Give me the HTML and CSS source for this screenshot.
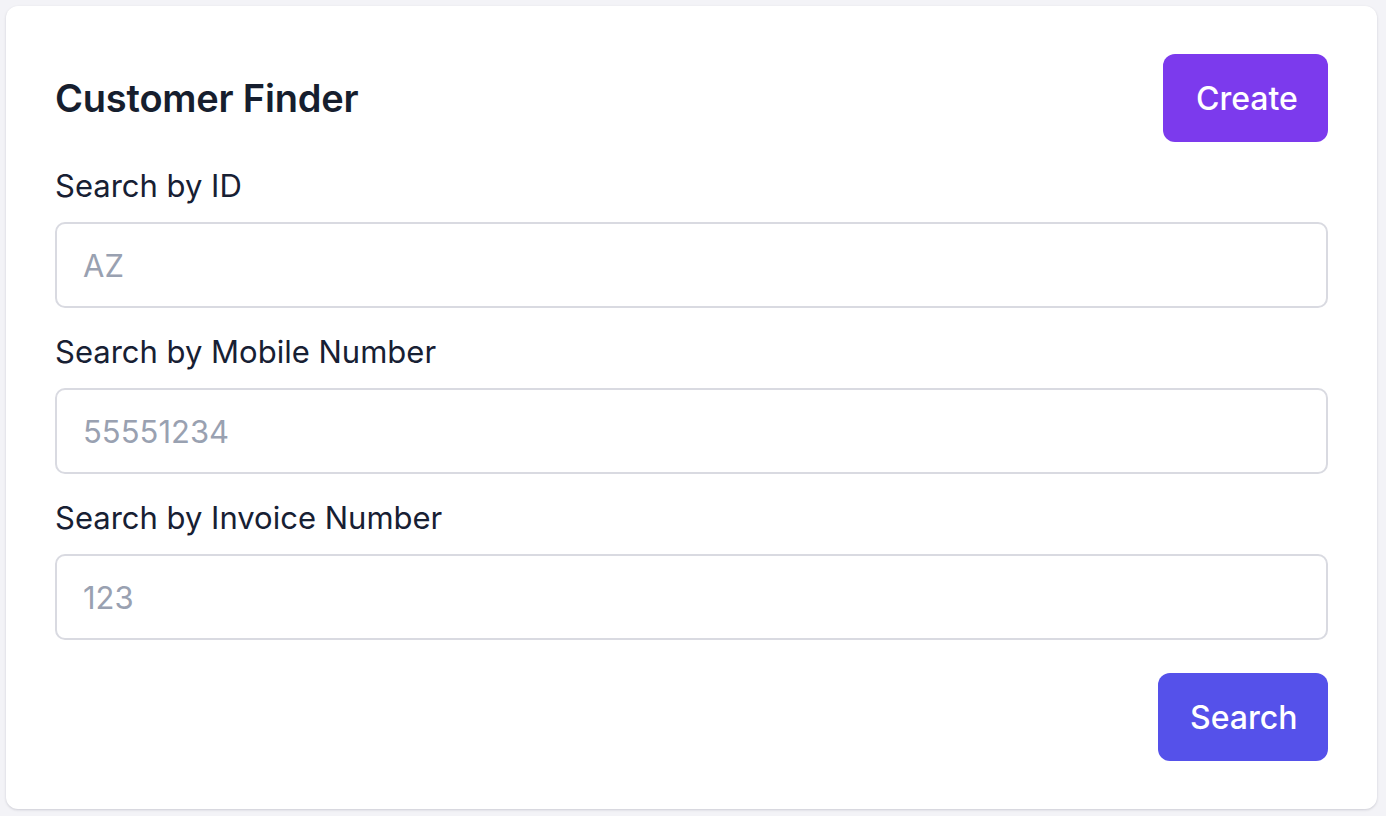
FILE: index.html
```html
<!DOCTYPE html>
<html lang="en">
<head>
<meta charset="utf-8">
<title>Customer Finder</title>
<link rel="stylesheet" href="styles.css">
</head>
<body>
<main class="card">
  <header class="card-header">
    <h1 class="title">Customer Finder</h1>
    <button class="btn btn-create" type="button">Create</button>
  </header>
  <div class="field">
    <label class="label" for="cid">Search by ID</label>
    <input class="input" id="cid" type="text" placeholder="AZ">
  </div>
  <div class="field">
    <label class="label" for="mobile">Search by Mobile Number</label>
    <input class="input" id="mobile" type="text" placeholder="55551234">
  </div>
  <div class="field">
    <label class="label" for="invoice">Search by Invoice Number</label>
    <input class="input" id="invoice" type="text" placeholder="123">
  </div>
  <div class="actions">
    <button class="btn btn-search" type="button">Search</button>
  </div>
</main>
</body>
</html>
```

FILE: styles.css
```css
* { box-sizing: border-box; }
html, body { height: 100%; }
body {
  margin: 0;
  padding: 6px 9px 6px 6px;
  background: #f3f3f7;
  font-family: Inter, "Noto Sans", "Liberation Sans", sans-serif;
  color: #172033;
}
.card {
  display: flex;
  flex-direction: column;
  background: #ffffff;
  border-radius: 12px;
  box-shadow: 0 1px 3px rgba(30, 30, 60, 0.12), 0 1px 2px rgba(30, 30, 60, 0.06);
  padding: 48px 49px 48px 49px;
}
.card-header {
  display: flex;
  align-items: center;
  justify-content: space-between;
}
.title {
  margin: 0;
  font-size: 38px;
  font-weight: 600;
  letter-spacing: -0.2px;
  color: #161e2e;
}
.btn {
  border: none;
  height: 88px;
  border-radius: 12px;
  color: #ffffff;
  font-family: inherit;
  font-size: 32px;
  font-weight: 500;
  cursor: pointer;
}
.btn-create {
  background: #7c3aed;
  padding: 0 33px;
  width: 165px;
}
.btn-search {
  background: #5551ea;
  padding: 0 32px;
  width: 170px;
}
.field {
  display: flex;
  flex-direction: column;
  margin-top: 26px;
}
.label {
  font-size: 31px;
  line-height: 36px;
  margin-bottom: 18px;
  color: #172033;
}
.input {
  height: 86px;
  width: 100%;
  border: 2px solid #d9dae1;
  border-radius: 10px;
  padding: 0 26px;
  font-family: inherit;
  font-size: 31px;
  color: #172033;
  background: #ffffff;
  outline: none;
}
.input::placeholder { color: #99a1b1; }
.actions {
  display: flex;
  justify-content: flex-end;
  margin-top: 33px;
}
```
